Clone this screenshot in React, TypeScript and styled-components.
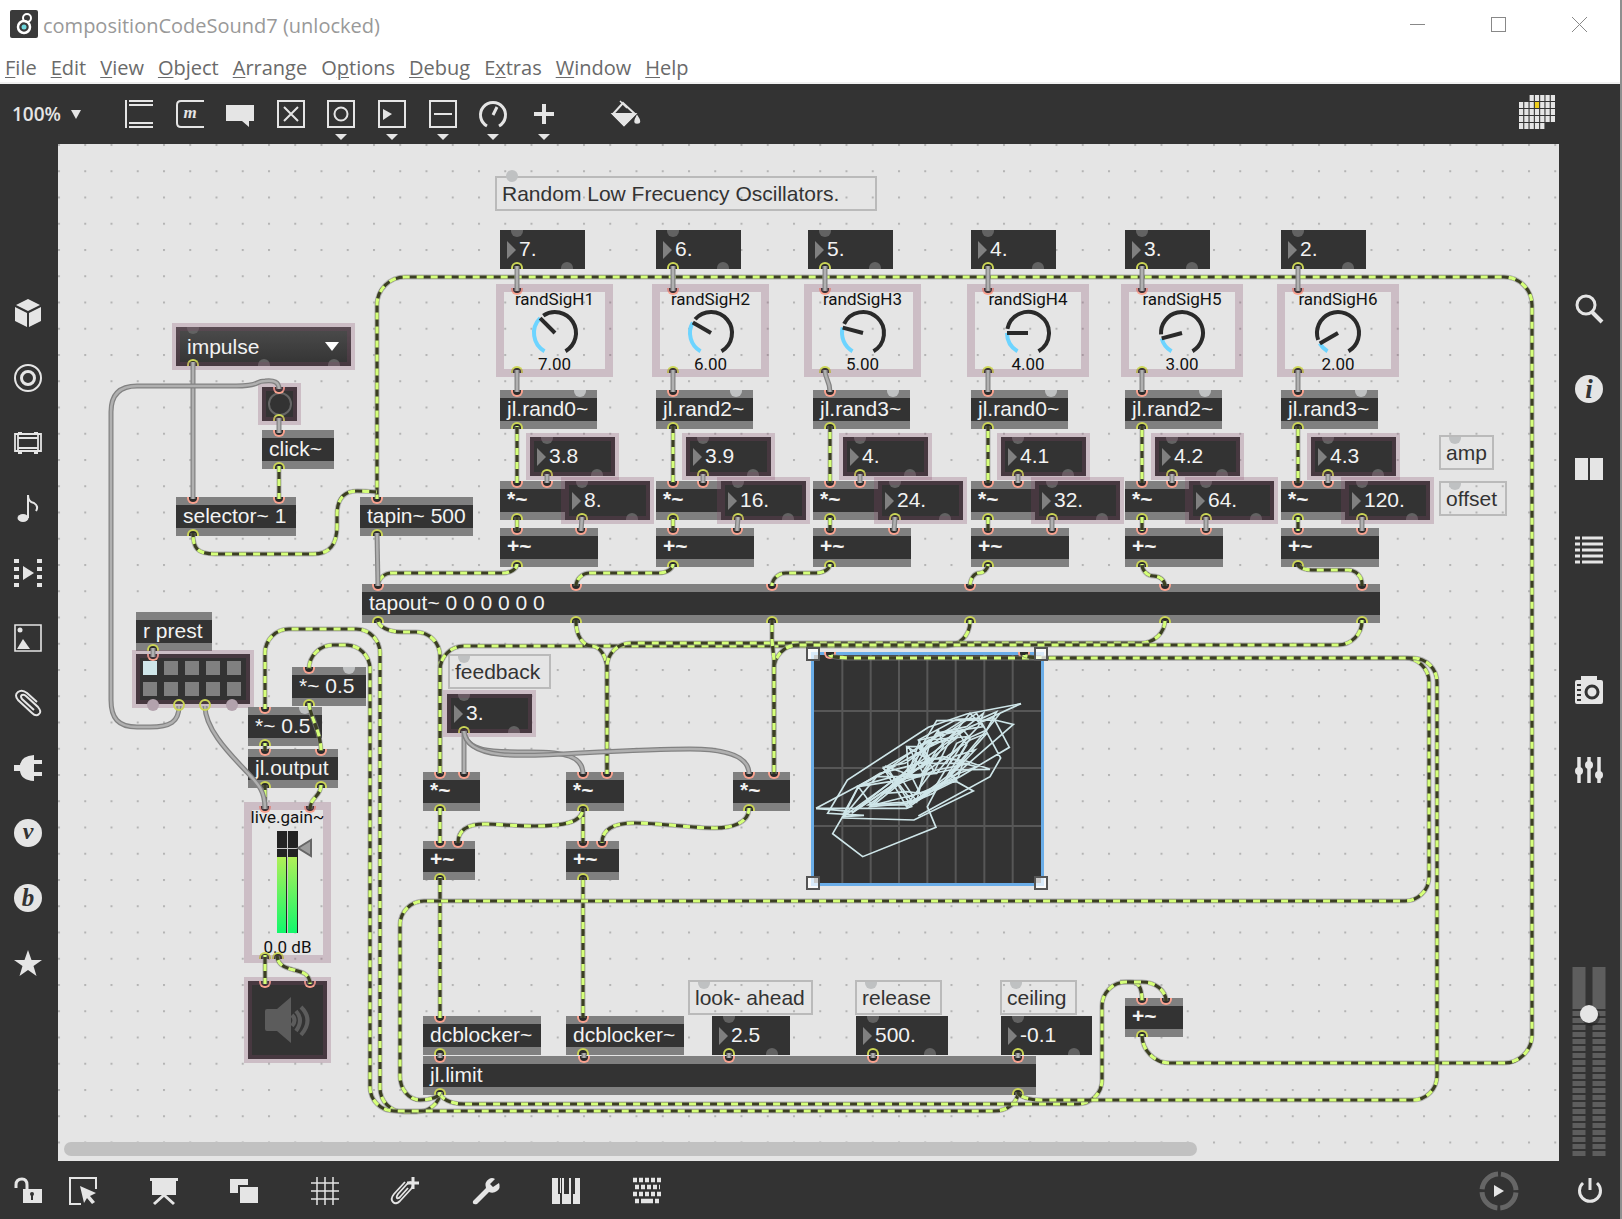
import React from "react";
import styled, { createGlobalStyle, css } from "styled-components";

const colors = {
  chrome: "#333333",
  canvas: "#e5e5e5",
  ink: "#e5e5e5",
  bar: "#808080",
  inlet: "#f9a28f",
  outlet: "#ccd656",
  lime: "#d5ff7a",
};

/* Patcher coordinates are window coordinates; the canvas begins here. */
const ORIGIN_X = 58;
const ORIGIN_Y = 144;

const GlobalStyle = createGlobalStyle`
  * { box-sizing: border-box; }
  body { margin: 0; background: #fff; }
  button, input, select { font: inherit; color: inherit; }
  button { border: 0; padding: 0; background: none; cursor: pointer; }
`;

/* ---------- window frame ---------- */

const Window = styled.div`
  display: flex;
  flex-direction: column;
  min-height: 100vh;
  overflow: hidden;
  border-right: 2px solid #8f8f8f;
  font-family: "Liberation Sans", Arial, sans-serif;
  background: ${colors.chrome};
`;

const TitleBar = styled.header`
  display: flex;
  align-items: center;
  height: 48px;
  padding-left: 10px;
  gap: 5px;
  background: #fff;
  color: #999;
  font: 20px/28px "Open Sans", "Noto Sans", sans-serif;
`;

const Title = styled.h1`
  flex: 1;
  margin: 0;
  font: inherit;
  padding-top: 4px;
`;

const WindowButton = styled.button`
  display: grid;
  place-items: center;
  width: 76px;
  height: 48px;
`;

const WindowButtons = styled.div`
  display: flex;
  gap: 5px;
  padding-right: 3px;
`;

const MenuBar = styled.nav`
  display: flex;
  align-items: center;
  gap: 14px;
  height: 36px;
  padding: 6px 5px 0;
  border-bottom: 2px solid #f0f0f0;
  background: #fff;
  color: #6a6a6a;
  font: 20px/28px "Open Sans", "Noto Sans", sans-serif;
`;

const Mnemonic = styled.span`
  text-decoration: underline;
  text-decoration-thickness: 1px;
  text-underline-offset: 2px;
`;

const Toolbar = styled.div`
  display: flex;
  align-items: center;
  height: 60px;
  padding: 0 65px 0 12px;
  color: ${colors.ink};
`;

const ZoomBox = styled.label`
  display: flex;
  align-items: center;
  gap: 5px;
  width: 102px;
  font: 600 19px/28px "Open Sans", "Noto Sans", sans-serif;

  select {
    appearance: none;
    width: 54px;
    padding: 0;
    border: 0;
    background: none;
    color: inherit;
  }
`;

const ToolGroup = styled.div`
  display: grid;
  grid-template-columns: repeat(9, 1fr);
  width: 455px;
`;

const ToolButton = styled.button`
  display: grid;
  place-items: center;
  min-width: 50px;
  height: 60px;
  color: ${colors.ink};
`;

const FillGroup = styled.div`
  flex: 1;
  padding-left: 31px;
`;

const Body = styled.div`
  display: grid;
  grid-template-columns: 58px minmax(0, 1fr) 61px;
  flex: 1;
`;

const LeftRail = styled.aside`
  display: flex;
  flex-direction: column;
  align-items: center;
  padding: 136px 3px 0 0;
  color: ${colors.ink};
`;

const RightRail = styled(LeftRail)`
  padding: 125px 1px 5px 0;
`;

const RailButton = styled.button<{ $h?: number; $gap?: number }>`
  display: grid;
  place-items: center;
  width: 40px;
  height: ${(p) => p.$h ?? 65}px;
  margin-top: ${(p) => p.$gap ?? 0}px;
  flex: none;
`;

const VolumeSlider = styled.label`
  display: grid;
  place-items: center;
  margin-top: auto;
  width: 34px;
  height: 190px;

  > * { grid-area: 1 / 1; }
`;

const HiddenRange = styled.input`
  width: 100%;
  height: 100%;
  margin: 0;
  opacity: 0;
`;

const BottomBar = styled.footer`
  display: flex;
  align-items: center;
  height: 58px;
  padding-top: 2px;
  color: ${colors.ink};
`;

const BottomButton = styled.button<{ $w: number }>`
  display: grid;
  place-items: center;
  width: ${(p) => p.$w}px;
  height: 56px;
`;

const TransportGroup = styled.div`
  display: flex;
  gap: 30px;
  margin-left: auto;
`;

/* ---------- patcher canvas ---------- */

const Canvas = styled.main`
  position: relative;
  min-height: 1017px;
  overflow: hidden;
  background: ${colors.canvas};
`;

const Layer = styled.svg`
  position: absolute;
  top: 0;
  left: 0;
  pointer-events: none;
`;

const ScrollThumb = styled.div`
  position: absolute;
  left: 6px;
  bottom: 5px;
  width: 75.5%;
  height: 14px;
  border-radius: 7px;
  background: #c1c1c1;
`;

type Place = { $x: number; $y: number; $w: number; $h?: number; $halo?: boolean };

const halo = css`
  &::after {
    content: "";
    position: absolute;
    inset: -4px;
    border: 8px solid rgba(130, 71, 102, 0.25);
    pointer-events: none;
  }
`;

const Box = styled.div<Place>`
  position: absolute;
  left: ${(p) => p.$x - ORIGIN_X}px;
  top: ${(p) => p.$y - ORIGIN_Y}px;
  width: ${(p) => p.$w}px;
  height: ${(p) => p.$h ?? 39}px;
  color: #f2f2f2;
  font-size: 21px;
  line-height: 23px;
  white-space: nowrap;
  ${(p) => p.$halo && halo}
`;

const ObjectBox = styled(Box)<{ $operator: boolean }>`
  background: ${colors.chrome};
  box-shadow: inset 0 8px ${colors.bar}, inset 0 -8px ${colors.bar};
  padding: ${(p) => (p.$operator ? 6 : 7)}px 7px;
  font-weight: ${(p) => (p.$operator ? 700 : 400)};
`;

const NumberFrame = styled(Box)`
  display: flex;
  align-items: center;
  background: ${colors.chrome};
  padding-left: 7px;
  gap: 3px;

  input {
    width: 60px;
    min-width: 0;
    height: 24px;
    margin-bottom: 2px;
    padding: 0;
    border: 0;
    background: none;
    outline: none;
  }
`;

const Triangle = styled.span`
  flex: none;
  border-left: 9px solid ${colors.bar};
  border-top: 9px solid transparent;
  border-bottom: 9px solid transparent;
`;

const CommentBox = styled(Box)`
  border: 2px solid #bababa;
  color: #333;
  padding: 4px 5px;
`;

type PortKind = "on" | "off" | "light";

const Port = styled.i<{ $side: "in" | "out"; $at: number; $kind: PortKind }>`
  position: absolute;
  left: ${(p) => p.$at - 6}px;
  width: 12px;
  height: 7px;
  ${(p) =>
    p.$side === "in"
      ? css`top: 0; border-radius: 0 0 7px 7px;`
      : css`bottom: 0; border-radius: 7px 7px 0 0;`}
  ${(p) =>
    p.$kind === "on"
      ? css`
          background: #2b2b2b;
          border: 2px solid ${p.$side === "in" ? colors.inlet : colors.outlet};
          border-${p.$side === "in" ? "top" : "bottom"}: 0;
        `
      : css`
          background: ${p.$kind === "light" ? "#bfc1c2" : "#626262"};
        `}
`;

type Ports = [number, PortKind?][];

function PortSet({ ins = [], outs = [] }: { ins?: Ports; outs?: Ports }) {
  return (
    <>
      {ins.map(([at, kind]) => (
        <Port key={"i" + at} $side="in" $at={at} $kind={kind ?? "on"} />
      ))}
      {outs.map(([at, kind]) => (
        <Port key={"o" + at} $side="out" $at={at} $kind={kind ?? "on"} />
      ))}
    </>
  );
}

type ObjProps = { x: number; y: number; w: number; text: string; ins?: Ports; outs?: Ports };

function Obj({ x, y, w, text, ins, outs = [[17]] }: ObjProps) {
  return (
    <ObjectBox $x={x} $y={y} $w={w} $operator={text.length === 2}>
      {text}
      <PortSet ins={ins} outs={outs} />
    </ObjectBox>
  );
}

type NumProps = { x: number; y: number; w?: number; value: string; name: string; lit?: boolean };

function NumberBox({ x, y, w = 85, value, name, lit }: NumProps) {
  return (
    <NumberFrame $x={x} $y={y} $w={w} $halo={lit}>
      <Triangle />
      <input aria-label={name} defaultValue={value} />
      <PortSet ins={[[17, "off"]]} outs={[[17], [w - 18, "off"]]} />
    </NumberFrame>
  );
}

function Comment({ x, y, w, text }: { x: number; y: number; w: number; text: string }) {
  return (
    <CommentBox $x={x} $y={y} $w={w} $h={35}>
      {text}
      <Port $side="in" $at={14} $kind="light" />
    </CommentBox>
  );
}

/* ---------- dials ---------- */

const DialFrame = styled(Box)`
  display: flex;
  flex-direction: column;
  justify-content: space-between;
  align-items: center;
  color: #111;
  font: 17px/18px Roboto, "Open Sans", sans-serif;
  padding-top: 2px;

  > svg { position: absolute; left: calc(50% - 55px); top: 0; }
  > input { position: absolute; left: 30px; top: 22px; width: 50px; height: 46px; }
`;

const polar = (deg: number, r: number) => {
  const a = (deg * Math.PI) / 180;
  return [55 - Math.sin(a) * r, 45 + Math.cos(a) * r] as const;
};

const arc = (from: number, to: number) => {
  const [x1, y1] = polar(from, 21);
  const [x2, y2] = polar(to, 21);
  return `M${x1} ${y1}A21 21 0 ${to - from > 180 ? 1 : 0} 1 ${x2} ${y2}`;
};

function Dial({ x, w, name, value }: { x: number; w: number; name: string; value: number }) {
  const angle = 30 + value * 15;
  const [nx, ny] = polar(angle, 21);
  return (
    <DialFrame $x={x} $y={288} $w={w} $h={85} $halo>
      <label htmlFor={name}>{name}</label>
      <output htmlFor={name}>{value.toFixed(2)}</output>
      <svg width="110" height="85" fill="none" strokeWidth="4">
        <path d={arc(30, angle)} stroke="#6dd4ff" />
        <path d={arc(angle + 11, 330)} stroke="#2a2a2a" />
        <path d={`M55 45L${nx} ${ny}`} stroke="#2a2a2a" />
      </svg>
      <HiddenRange id={name} type="range" min={0} max={20} defaultValue={value} />
      <PortSet ins={[[17]]} outs={[[17]]} />
    </DialFrame>
  );
}

/* ---------- single widgets ---------- */

const MenuFrame = styled(Box)`
  background: linear-gradient(#4c4c4c, #333);

  select {
    appearance: none;
    width: 100%;
    height: 100%;
    padding: 0 11px;
    border: 0;
    background: none;
    outline: none;
  }

  > svg { position: absolute; right: 12px; top: 15px; pointer-events: none; }
`;

const DarkBox = styled(Box)`
  background: ${colors.chrome};

  > button { display: grid; place-items: center; width: 100%; height: 100%; }
`;

const PresetFrame = styled(Box)`
  display: grid;
  grid-template-columns: repeat(5, 14px);
  grid-auto-rows: 14px;
  gap: 7px;
  padding: 7px;
  background: ${colors.chrome};
`;

const Slot = styled.button<{ $active: boolean }>`
  background: ${(p) => (p.$active ? "#cfe6e9" : colors.bar)};
`;

const GainFrame = styled(Box)`
  display: flex;
  flex-direction: column;
  justify-content: space-between;
  align-items: center;
  color: #111;
  font: 17px/20px Roboto, "Open Sans", sans-serif;
  padding: 1px 0 2px;

  > svg { position: absolute; left: 0; top: 0; }
  > input { position: absolute; left: 20px; top: 24px; width: 46px; height: 104px; }
`;

const ScopeFrame = styled(Box)`
  background: ${colors.chrome};
`;

/* ---------- data ---------- */

const columns = [
  { top: 500, obj: 500, offset: 565, dial: 109, value: 7, amp: "3.8", off: "8.", rand: "jl.rand0~" },
  { top: 656, obj: 656, offset: 721, dial: 109, value: 6, amp: "3.9", off: "16.", rand: "jl.rand2~" },
  { top: 808, obj: 813, offset: 878, dial: 109, value: 5, amp: "4.", off: "24.", rand: "jl.rand3~" },
  { top: 971, obj: 971, offset: 1035, dial: 114, value: 4, amp: "4.1", off: "32.", rand: "jl.rand0~" },
  { top: 1125, obj: 1125, offset: 1189, dial: 114, value: 3, amp: "4.2", off: "64.", rand: "jl.rand2~" },
  { top: 1281, obj: 1281, offset: 1345, dial: 114, value: 2, amp: "4.3", off: "120.", rand: "jl.rand3~" },
];

const taps = [378, 576, 772, 970, 1165, 1362];

type Point = [number, number];

/* Polyline with rounded corners, as patch cords are drawn. */
function route(points: Point[], radius = 24): string {
  let d = `M${points[0][0]} ${points[0][1]}`;
  for (let i = 1; i < points.length - 1; i++) {
    const [px, py] = points[i - 1];
    const [x, y] = points[i];
    const [nx, ny] = points[i + 1];
    const before = Math.hypot(x - px, y - py);
    const after = Math.hypot(nx - x, ny - y);
    const a = Math.min(radius, i === 1 ? before : before / 2);
    const b = Math.min(radius, i === points.length - 2 ? after : after / 2);
    const sx = x + ((px - x) / before) * a;
    const sy = y + ((py - y) / before) * a;
    const ex = x + ((nx - x) / after) * b;
    const ey = y + ((ny - y) / after) * b;
    const k = 0.45;
    d += `L${sx} ${sy}C${x + (sx - x) * k} ${y + (sy - y) * k} ${x + (ex - x) * k} ${y + (ey - y) * k} ${ex} ${ey}`;
  }
  const last = points[points.length - 1];
  return d + `L${last[0]} ${last[1]}`;
}

const tapRows = [573, 573, 573, 573, 576, 570];

const signalCords: string[] = [
  route([[1142, 1034], [1142, 1063], [1532, 1063], [1532, 277], [377, 277], [377, 499]], 28),
  "M193 533C193 548 197 554 215 554L313 554C331 554 337 543 337 526L337 515C337 498 345 491 357 491C366 491 377 492 377 492",
  "M279 466V499",
  ...columns.flatMap((c, i) => [
    `M${c.obj + 17} 426V483`,
    `M${c.obj + 17} 517V531`,
    route([[c.obj + 17, 564], [c.obj + 17, tapRows[i]], [taps[i], tapRows[i]], [taps[i], 586]], 14),
  ]),
  route([[378, 620], [378, 632], [440, 632], [440, 774]]),
  route([[970, 620], [970, 646], [440, 646], [440, 774]]),
  route([[576, 620], [576, 646], [607, 646], [607, 774]]),
  route([[1165, 620], [1165, 643], [607, 643], [607, 774]]),
  route([[1362, 620], [1362, 645], [774, 645], [774, 774]]),
  "M772 620V640L774 660V774",
  "M440 808V843",
  "M583 808V843",
  "M583 808C583 823 562 826 535 826C510 826 500 824 485 824C468 824 458 830 458 843",
  "M749 808C749 824 730 828 715 828C690 828 660 823 635 823C615 823 602 828 602 843",
  "M440 877V1018",
  "M583 877V1018",
  route([[440, 1092], [440, 1112], [380, 1112], [380, 629], [265, 629], [265, 709]]),
  route([[1018, 1092], [1018, 1111], [370, 1111], [370, 645], [309, 645], [309, 669]]),
  "M1102 982L1130 982C1138 982 1142 986 1142 1001",
  route([[440, 1092], [440, 1104], [1102, 1104], [1102, 982], [1166, 982], [1166, 1001]]),
  route([[440, 1092], [440, 1100], [400, 1100], [400, 901], [1429, 901], [1429, 658], [830, 658], [830, 655]]),
  route([[1018, 1092], [1018, 1100], [1437, 1100], [1437, 658], [1024, 658], [1024, 655]]),
  "M309 702C309 716 321 730 321 751",
  "M265 743V751",
  "M265 785V809",
  "M321 785C321 797 310 797 310 809",
  "M265 955V984",
  "M277 956C279 976 310 964 310 984",
].filter((d) => !d.startsWith("M1102 982L"));

const lowerBranch = "M1120 982L1130 982C1138 982 1142 986 1142 1001";

const controlCords: string[] = [
  ...columns.flatMap((c) => [
    `M${c.top + 17} 266V291`,
    `M${c.top + 17} 370C${c.top + 17} 380 ${c.obj + 17} 380 ${c.obj + 17} 392`,
    `M${c.obj + 47} 474V483`,
    `M${c.offset + 17} 517L${c.obj + 81} 531`,
  ]),
  "M193 362V499",
  "M279 418V433",
  "M377 533L378 586",
  "M464 731V774",
  "M464 731C466 752 490 752 530 752C565 752 583 756 583 774",
  "M464 731C466 760 520 757 580 753C620 751 660 749 690 749C730 749 749 758 749 774",
  "M179 706C179 722 170 727 150 727L137 727C118 727 111 718 111 700L111 412C111 394 120 386 137 386L236 386C262 386 254 381 265 381C274 380 279 382 279 389",
  "M205 706C205 730 232 756 245 770C258 784 265 790 265 809",
  "M153 648V657",
  "M440 1053V1058",
  "M584 1053V1058",
  "M729 1053V1058",
  "M873 1053V1058",
  "M1018 1053V1058",
];

/* Oscilloscope trace, in thirds of a pixel. */
const trace = [
  "693,221 530,252 415,292 172,450 113,550 222,556 158,560 128,611 218,680 438,592 412,530 448,462 500,455 550,483 372,570 158,564",
  "78,535 276,430 400,340 440,272 615,270 670,283 490,440 350,535 200,535 78,535",
  "693,221 585,270 400,360 205,470 160,560 340,430 540,290 610,262 658,352 510,440 360,515 245,524 205,470 300,455 480,420 600,418 520,390 410,385 350,350 355,430 390,330 520,300 540,325 470,440 350,530 280,412 345,400 500,290 560,250 632,384 600,440 385,558",
  "160,560 260,440 390,440 440,360 500,300 470,350 430,430 330,440 380,515 400,430 540,330 590,310 430,490 360,520 450,470 555,360 490,380 430,480 250,525 300,485 420,385 390,350 450,310 580,290 540,250 500,300 530,345 500,395 560,410 480,440 370,520 310,440 200,470",
  "185,550 420,390 385,330 500,268 575,265 620,245 590,300 500,340 470,400 380,400 330,460 280,415 390,350 430,420 350,525 235,525 360,435 445,300 460,350 400,430 355,350 395,350",
  "158,556 205,470 270,430 350,410 460,380 520,395 505,440 390,490 350,485 290,490 350,420 440,310 530,290 580,250 565,290 480,380 440,430 360,435 290,410 365,530 350,535",
  "205,535 300,470 440,420 540,400 480,400 530,320 415,330 385,350 415,400 330,440 240,530 350,520 395,500 360,430 400,345 520,270 570,265",
  "78,535 190,545 310,450 400,410 420,340 480,330 505,320 430,380 380,490 440,480 500,450 480,430 590,300 630,250",
];

const menus: [string, number][] = [
  ["File", 0], ["Edit", 0], ["View", 0], ["Object", 0], ["Arrange", 0],
  ["Options", 1], ["Debug", 0], ["Extras", 1], ["Window", 0], ["Help", 0],
];

/* ---------- icons ---------- */

type Glyph = { label: string; art: React.ReactNode };

const Drawing = styled.svg`
  overflow: visible;
`;

function Icon({ children }: { children: React.ReactNode }) {
  return (
    <Drawing width="28" height="28" viewBox="0 0 28 28" fill="none" stroke="currentColor" strokeWidth="2">
      {children}
    </Drawing>
  );
}

function ToolIcon({ art, more }: { art: React.ReactNode; more?: boolean }) {
  return (
    <Drawing width="28" height="56" viewBox="0 -14 28 56" fill="none" stroke="currentColor" strokeWidth="2">
      {art}
      {more && <path d="M8 34H20L14 40Z" fill="currentColor" stroke="none" />}
    </Drawing>
  );
}

const glyphText = (char: string, size: number, y: number, fill = "currentColor") => (
  <text x="14" y={y} textAnchor="middle" fill={fill} stroke="none" fontSize={size}
    fontFamily="Liberation Serif, serif" fontStyle="italic" fontWeight="bold">{char}</text>
);

const tools: (Glyph & { more?: boolean })[] = [
  { label: "Object", art: <path d="M1 0V28M4 1H28M4 5H28M4 23H28M4 27H28" /> },
  { label: "Message", art: <><path d="M28 1H5Q1 1 1 5V23Q1 27 5 27H28" />{glyphText("m", 17, 18)}</> },
  { label: "Comment", art: <path d="M0 5H28V21H23V27L16 21H0Z" fill="currentColor" stroke="none" /> },
  { label: "Toggle", art: <><path d="M1 1H27V27H1Z" /><path d="M7 7L21 21M21 7L7 21" /></> },
  { label: "Button", more: true, art: <><path d="M1 1H27V27H1Z" /><circle cx="14" cy="14" r="6.500" /></> },
  { label: "Playback", more: true, art: <><path d="M1 1H27V27H1Z" /><path d="M5 9V20L14 14Z" fill="currentColor" stroke="none" /></> },
  { label: "Slider", more: true, art: <path d="M1 1H27V27H1ZM5 14H23" /> },
  { label: "Dial", more: true, art: <path d="M8 26A12.500 12.500 0 1 1 20 26M14 15L18 7" strokeWidth="3" /> },
  { label: "Add", more: true, art: <path d="M14 4V24M4 14H24" strokeWidth="4" /> },
];

const bucketArt = (
  <>
    <path d="M12 3L24 14L13 25L2 14Z" />
    <path d="M2 14H24L13 25Z" fill="currentColor" />
    <path d="M9 1L16 8M26 16Q31 23 26 23Q22 23 26 16Z" fill="currentColor" strokeWidth="1.500" />
  </>
);

const leftGlyphs: Glyph[] = [
  { label: "Packages", art: <g fill="currentColor" stroke="none"><path d="M14 0L26 6L14 12L2 6Z" /><path d="M1 8L13 14V28L1 22Z" /><path d="M27 8L15 14V28L27 22Z" /></g> },
  { label: "Targets", art: <><circle cx="14" cy="14" r="13" /><circle cx="14" cy="14" r="6.500" strokeWidth="3" /></> },
  { label: "Amps", art: <path d="M1 5H27V22H1ZM4 5V22M24 5V22M4 9H24M4 19H24M4 4H8M20 4H24M4 24H8M20 24H24" strokeWidth="1.800" /> },
  { label: "Audio", art: <><ellipse cx="9" cy="24" rx="5.500" ry="4" fill="currentColor" stroke="none" /><path d="M14 24V1Q14 8 20 9Q25 12 22 17" /></> },
  { label: "Video", art: <g fill="currentColor" stroke="none"><path d="M9 7V21L20 14Z" /><path d="M0 0H5V4H0ZM0 8H5V12H0ZM0 16H5V20H0ZM0 24H5V28H0ZM23 0H28V4H23ZM23 8H28V12H23ZM23 16H28V20H23ZM23 24H28V28H23Z" /></g> },
  { label: "Images", art: <><path d="M1 1H27V27H1Z" strokeWidth="1.600" /><circle cx="6" cy="6" r="2.500" fill="currentColor" stroke="none" /><path d="M3 25L9 15L16 25Z" fill="currentColor" stroke="none" /></> },
  { label: "Snippets", art: <path d="M20 21L8 10Q6 7 8 6Q10 5 12 7L24 18Q28 23 25 25Q22 28 18 24L4 11Q0 6 4 3Q8 0 13 4L23 13" /> },
  { label: "Plug-ins", art: <path d="M20 1V27Q7 26 6 17H0V11H6Q7 2 20 1ZM20 6H28V10H20ZM20 18H28V22H20Z" fill="currentColor" stroke="none" /> },
  { label: "Vizzie", art: <><circle cx="14" cy="14" r="14" fill="currentColor" stroke="none" />{glyphText("v", 24, 20, colors.chrome)}</> },
  { label: "Beap", art: <><circle cx="14" cy="14" r="14" fill="currentColor" stroke="none" />{glyphText("b", 25, 22, colors.chrome)}</> },
  { label: "Favourites", art: <path d="M14 1L17.500 11H28L19.500 17L22.500 27L14 21L5.500 27L8.500 17L0 11H10.500Z" fill="currentColor" stroke="none" /> },
];

const rightGlyphs: (Glyph & { h: number; gap?: number })[] = [
  { label: "Search", h: 80, art: <><circle cx="11" cy="10" r="9" strokeWidth="3" /><path d="M17 17L27 27" strokeWidth="4" /></> },
  { label: "Inspector", h: 80, art: <><circle cx="14" cy="14" r="14" fill="currentColor" stroke="none" />{glyphText("i", 27, 23, colors.chrome)}</> },
  { label: "Reference", h: 80, art: <path d="M0 3H13V25H0ZM15 3H28V25H15Z" fill="currentColor" stroke="none" /> },
  { label: "Console", h: 80, art: <path d="M0 3H5M7 3H28M0 9H5M7 9H28M0 15H5M7 15H28M0 21H5M7 21H28M0 27H5M7 27H28" strokeWidth="3" /> },
  { label: "Snapshots", h: 80, gap: 61, art: <><path d="M6 0H22V4H26Q28 4 28 6V26Q28 28 26 28H2Q0 28 0 26V6Q0 4 2 4H6Z" fill="currentColor" stroke="none" /><circle cx="17" cy="16" r="6" stroke={colors.chrome} strokeWidth="3" /><path d="M2 9H6M2 14H6M2 19H6M2 24H6" stroke={colors.chrome} /></> },
  { label: "Mixer", h: 80, art: <><path d="M4 1V27M14 1V27M24 1V27" strokeWidth="3.500" /><g fill="currentColor" stroke="none"><circle cx="4" cy="15" r="4" /><circle cx="14" cy="9" r="4" /><circle cx="24" cy="19" r="4" /></g></> },
];

const bottomGlyphs: (Glyph & { w: number })[] = [
  { label: "Unlock", w: 56, art: <><path d="M2 11V8Q2 2 8 2Q13 2 13 8V12" strokeWidth="3" /><path d="M9 12H28V26H9Z" fill="currentColor" stroke="none" /><circle cx="18" cy="17" r="2" fill={colors.chrome} stroke="none" /><path d="M18 17V23" stroke={colors.chrome} /></> },
  { label: "Select", w: 54, art: <><path d="M12 27H1V1H27V12" /><path d="M11 9L27 16L21 19L26 25L23 27L18 21L15 26Z" fill="currentColor" stroke="none" /></> },
  { label: "Presentation", w: 107, art: <><path d="M0 1H28V4H26V18H2V4H0Z" fill="currentColor" stroke="none" /><path d="M14 18L4 27M14 18L24 27" strokeWidth="3" /></> },
  { label: "New view", w: 54, art: <><path d="M0 2H18V8H8V16H0Z" fill="currentColor" stroke="none" /><path d="M10 10H28V26H10Z" fill="currentColor" stroke="none" /></> },
  { label: "Grid", w: 107, art: <path d="M6 0V28M14 0V28M22 0V28M0 6H28M0 14H28M0 22H28" strokeWidth="1.500" /> },
  { label: "Add snippet", w: 54, art: <><path d="M17 11L9 20Q7 22 6 21Q5 20 7 17L16 7Q19 4 21 6Q23 8 20 12L9 24Q5 28 2 25Q-1 22 3 17L14 5" strokeWidth="1.800" /><path d="M22 0V12M16 6H28" strokeWidth="3" /></> },
  { label: "Tools", w: 107, art: <path d="M1 24L14 11Q12 5 17 2Q20 0 23 2L18 7L21 10L27 6Q29 11 25 14Q21 17 17 15L5 27Q0 28 1 24Z" fill="currentColor" stroke="none" /> },
  { label: "Keyboard", w: 54, art: <path d="M0 1H6V17H8V27H0ZM10 1H12V17H17V1H19V27H10ZM22 17H23V1H28V27H21V17ZM8 1H9V16H8Z" fill="currentColor" stroke="none" /> },
  { label: "Key mapping", w: 107, art: <g strokeWidth="4.500"><path d="M0 3H28" strokeDasharray="4 2" /><path d="M2 10H27" strokeDasharray="4 2" /><path d="M0 17H28" strokeDasharray="4 2" /><path d="M2 24H6M8 24H20M22 24H26" /></g> },
];

const powerArt = <path d="M14 1V13M7 6A10.500 10.500 0 1 0 21 6" strokeWidth="3" />;

const calendarCells: Point[] = [];
for (let row = 0; row < 5; row++) {
  for (let col = 0; col < 7; col++) {
    if ((row === 0 && col < 2) || (row === 4 && col > 4)) continue;
    calendarCells.push([col, row]);
  }
}

/* ---------- parts ---------- */

function Scope() {
  return (
    <ScopeFrame $x={811} $y={652} $w={233} $h={234}>
      <svg width="233" height="234" viewBox="63 66 699 702" fill="none">
        {[157, 242, 327, 412, 497, 583, 668].map((x) => (
          <path key={x} d={`M${x} 69V765`} stroke="#575757" strokeWidth="6" />
        ))}
        {[243, 414, 588].map((y) => (
          <path key={y} d={`M66 ${y}H759`} stroke="#575757" strokeWidth="6" />
        ))}
        {trace.map((points) => (
          <polyline key={points} points={points} stroke="#cfe6e9" strokeWidth="5" />
        ))}
        <rect x="67.500" y="70.500" width="690" height="693" stroke="#6aade8" strokeWidth="9" />
      </svg>
      <PortSet ins={[[19], [213]]} />
    </ScopeFrame>
  );
}

function Gain() {
  return (
    <GainFrame $x={248} $y={806} $w={79} $h={153} $halo>
      <label htmlFor="gain">live.gain~</label>
      <output htmlFor="gain">0.0 dB</output>
      <svg width="79" height="153">
        <defs>
          <linearGradient id="meter" x1="0" y1="0" x2="0" y2="1">
            <stop offset="0" stopColor="#b0ef58" />
            <stop offset="1" stopColor="#12f76c" />
          </linearGradient>
        </defs>
        <path d="M29 25H50V127H29Z" fill="#222" />
        <path d="M29 51H38V127H29ZM40 51H49V127H40Z" fill="url(#meter)" />
        <path d="M39.500 25V127M29 42.500H50" stroke="#c8c8c8" />
        <path d="M50 42L63 34V50Z" fill="#9c9c9c" stroke="#666" strokeWidth="2" />
      </svg>
      <HiddenRange id="gain" type="range" min={-70} max={6} defaultValue={0} />
      <PortSet ins={[[17], [62]]} outs={[[17], [30]]} />
    </GainFrame>
  );
}

function Cords() {
  return (
    <Layer width="1564" height="1017" viewBox={`${ORIGIN_X} ${ORIGIN_Y} 1564 1017`} fill="none">
      {[lowerBranch, ...signalCords].map((d, i) => (
        <g key={i}>
          <path d={d} stroke="#8c8c8c" strokeOpacity="0.6" strokeWidth="5" />
          <path d={d} stroke="#3b3f22" strokeWidth="3.200" />
          <path d={d} stroke={colors.lime} strokeWidth="3.200" strokeDasharray="7 7" strokeDashoffset={(i * 5) % 14} />
        </g>
      ))}
      {controlCords.map((d, i) => (
        <g key={i}>
          <path d={d} stroke="#828282" strokeWidth="5" />
          <path d={d} stroke="#b0b0b0" strokeWidth="2.500" />
        </g>
      ))}
      {([[813, 654], [1041, 654], [813, 883], [1041, 883]] as Point[]).map(([x, y]) => (
        <rect key={`${x}-${y}`} x={x - 6} y={y - 6} width="12" height="12" fill="#fff" fillOpacity="0.75" stroke="#555" strokeWidth="2" />
      ))}
      {([[153, colors.bar], [179, colors.outlet], [205, colors.outlet], [232, colors.bar]] as [number, string][]).map(([x, c]) => (
        <circle key={x} cx={x} cy="705" r={c === colors.bar ? 6 : 5} fill={c === colors.bar ? "#b3a2ad" : "none"}
          stroke={c === colors.bar ? "none" : c} strokeWidth="2" />
      ))}
      <circle cx="512" cy="176" r="6" fill="#bfc1c2" />
    </Layer>
  );
}

function Patch() {
  return (
    <Canvas>
      <Layer width="100%" height="100%">
        <defs>
          <pattern id="grid" width="26.250" height="26.250" patternUnits="userSpaceOnUse">
            <rect width="2" height="2" fill="#b4b4b4" />
          </pattern>
        </defs>
        <rect width="100%" height="100%" fill="url(#grid)" />
      </Layer>

      <CommentBox $x={495} $y={176} $w={382} $h={35}>Random Low Frecuency Oscillators.</CommentBox>

      {columns.map((c, i) => (
        <React.Fragment key={c.top}>
          <NumberBox x={c.top} y={230} value={`${c.value}.`} name={`Rate ${i + 1}`} />
          <Dial x={c.top} w={c.dial} name={`randSigH${i + 1}`} value={c.value} />
          <Obj x={c.obj} y={390} w={97} text={c.rand} ins={[[17], [80, "light"]]} />
          <Obj x={c.obj} y={481} w={85} text="*~" ins={[[17], [47]]} />
          <Obj x={c.obj} y={528} w={98} text="+~" ins={[[17], [81]]} />
          <NumberBox x={c.obj + 30} y={437} value={c.amp} name={`Amp ${i + 1}`} lit />
          <NumberBox x={c.offset} y={481} value={c.off} name={`Offset ${i + 1}`} lit />
        </React.Fragment>
      ))}

      <Comment x={1439} y={435} w={55} text="amp" />
      <Comment x={1439} y={481} w={68} text="offset" />

      <MenuFrame $x={176} $y={327} $w={175} $halo>
        <select aria-label="Source" defaultValue="impulse"><option>impulse</option></select>
        <svg width="14" height="9"><path d="M0 0H14L7 9Z" fill="#fff" /></svg>
        <PortSet ins={[[17, "off"]]} outs={[[17], [88, "off"], [158, "off"]]} />
      </MenuFrame>
      <DarkBox $x={262} $y={387} $w={35} $h={34} $halo>
        <button aria-label="Bang">
          <svg width="26" height="26" fill="none"><circle cx="13" cy="13" r="11" stroke="#666" strokeWidth="2" /></svg>
        </button>
        <PortSet ins={[[17]]} outs={[[17]]} />
      </DarkBox>
      <Obj x={262} y={430} w={72} text="click~" ins={[[17]]} />
      <Obj x={176} y={497} w={120} text="selector~ 1" ins={[[17], [103]]} />
      <Obj x={360} y={497} w={113} text="tapin~ 500" ins={[[17]]} />
      <Obj x={362} y={584} w={1018} text="tapout~ 0 0 0 0 0 0"
        ins={taps.map((t) => [t - 362])} outs={taps.map((t) => [t - 362])} />

      <Obj x={136} y={612} w={76} text="r prest" />
      <PresetFrame $x={136} $y={654} $w={114} $h={50} $halo>
        {Array.from({ length: 10 }, (_, i) => (
          <Slot key={i} $active={i === 0} aria-label={`Preset ${i + 1}`} />
        ))}
        <PortSet ins={[[17]]} />
      </PresetFrame>
      <Obj x={292} y={667} w={74} text="*~ 0.5" ins={[[17], [57, "light"]]} />
      <Obj x={248} y={707} w={74} text="*~ 0.5" ins={[[17], [57, "light"]]} />
      <Obj x={248} y={749} w={90} text="jl.output" ins={[[17], [73]]} outs={[[17], [73]]} />
      <Gain />
      <DarkBox $x={248} $y={981} $w={79} $h={78} $halo>
        <button aria-label="Audio on">
          <svg width="78" height="78" fill="none" stroke="#5c5c5c" strokeWidth="4">
            <path d="M16 30Q16 28 18 28H28L42 16V62L28 50H18Q16 50 16 48Z" fill="#5c5c5c" stroke="none" />
            <path d="M43 34Q48 39 43 45M47 30Q55 39 47 50M52 26Q65 39 52 54" />
          </svg>
        </button>
        <PortSet ins={[[17], [62]]} />
      </DarkBox>

      <Comment x={448} y={654} w={103} text="feedback" />
      <NumberBox x={447} y={694} value="3." name="Feedback" lit />
      <Obj x={423} y={772} w={57} text="*~" ins={[[17], [41]]} />
      <Obj x={566} y={772} w={58} text="*~" ins={[[17], [41]]} />
      <Obj x={733} y={772} w={57} text="*~" ins={[[16], [41]]} outs={[[16]]} />
      <Obj x={423} y={841} w={52} text="+~" ins={[[17], [35]]} />
      <Obj x={566} y={841} w={53} text="+~" ins={[[17], [36]]} />
      <Scope />

      <Obj x={423} y={1016} w={118} text="dcblocker~" ins={[[17]]} />
      <Obj x={566} y={1016} w={118} text="dcblocker~" ins={[[17]]} />
      <Comment x={688} y={980} w={125} text="look- ahead" />
      <Comment x={855} y={980} w={87} text="release" />
      <Comment x={1000} y={980} w={77} text="ceiling" />
      <NumberBox x={712} y={1016} w={78} value="2.5" name="Look-ahead" />
      <NumberBox x={856} y={1016} w={92} value="500." name="Release" />
      <NumberBox x={1001} y={1016} w={91} value="-0.1" name="Ceiling" />
      <Obj x={423} y={1056} w={613} text="jl.limit"
        ins={[[17], [161], [306], [450], [595]]} outs={[[17], [595]]} />
      <Obj x={1125} y={998} w={58} text="+~" ins={[[17], [41]]} />

      <Cords />
      <ScrollThumb />
    </Canvas>
  );
}

export default function App() {
  return (
    <Window>
      <GlobalStyle />
      <TitleBar>
        <svg width="28" height="28" fill="none">
          <rect width="28" height="28" rx="2" fill="#3a3a3a" />
          <circle cx="14" cy="17" r="6" stroke="#fff" strokeWidth="2.500" />
          <circle cx="17" cy="8" r="4" stroke="#fff" strokeWidth="2" />
          <circle cx="14" cy="17" r="2.500" fill="#6fd8de" />
        </svg>
        <Title>compositionCodeSound7 (unlocked)</Title>
        <WindowButtons>
          <WindowButton aria-label="Minimize"><svg width="15" height="15"><path d="M0 7.500H15" stroke="#888" /></svg></WindowButton>
          <WindowButton aria-label="Maximize"><svg width="15" height="15" fill="none"><rect x=".5" y=".5" width="14" height="14" stroke="#888" /></svg></WindowButton>
          <WindowButton aria-label="Close"><svg width="15" height="15"><path d="M0 0L15 15M15 0L0 15" stroke="#888" /></svg></WindowButton>
        </WindowButtons>
      </TitleBar>
      <MenuBar>
        {menus.map(([name, at]) => (
          <button key={name}>
            {name.slice(0, at)}<Mnemonic>{name[at]}</Mnemonic>{name.slice(at + 1)}
          </button>
        ))}
      </MenuBar>
      <Toolbar>
        <ZoomBox>
          <select aria-label="Zoom" defaultValue="100%"><option>100%</option></select>
          <svg width="10" height="9"><path d="M0 0H10L5 9Z" fill="currentColor" /></svg>
        </ZoomBox>
        <ToolGroup>
          {tools.map((t) => (
            <ToolButton key={t.label} aria-label={t.label}>
              <ToolIcon art={t.art} more={t.more} />
            </ToolButton>
          ))}
        </ToolGroup>
        <FillGroup>
          <ToolButton aria-label="Fill colour"><ToolIcon art={bucketArt} /></ToolButton>
        </FillGroup>
        <button aria-label="Calendar">
          <svg width="36" height="34">
            {calendarCells.map(([col, row]) => (
              <rect key={`${col}-${row}`} x={col * 5.3} y={row * 7} width="4.200" height="6"
                fill={col === 3 && row === 1 ? "#f0cf1c" : "#e5e5e5"} />
            ))}
          </svg>
        </button>
      </Toolbar>
      <Body>
        <LeftRail>
          {leftGlyphs.map((g) => (
            <RailButton key={g.label} aria-label={g.label}><Icon>{g.art}</Icon></RailButton>
          ))}
        </LeftRail>
        <Patch />
        <RightRail>
          {rightGlyphs.map((g) => (
            <RailButton key={g.label} aria-label={g.label} $h={g.h} $gap={g.gap}><Icon>{g.art}</Icon></RailButton>
          ))}
          <VolumeSlider>
            <svg width="34" height="190" fill="none">
              <path d="M7 1V43M27 1V43" stroke="#5e5e5e" strokeWidth="13" />
              <path d="M7 45V190M27 45V190" stroke="#5e5e5e" strokeWidth="13" strokeDasharray="5 2" />
              <circle cx="19" cy="51" r="9" fill="#222" fillOpacity="0.5" />
              <circle cx="17" cy="48" r="9" fill="#e5e5e5" />
            </svg>
            <HiddenRange type="range" aria-label="Volume" />
          </VolumeSlider>
        </RightRail>
      </Body>
      <BottomBar>
        {bottomGlyphs.map((g) => (
          <BottomButton key={g.label} aria-label={g.label} $w={g.w}><Icon>{g.art}</Icon></BottomButton>
        ))}
        <TransportGroup>
          <BottomButton aria-label="Run" $w={60}>
            <svg width="40" height="40" fill="none">
              <circle cx="20" cy="20" r="17" stroke="#666" strokeWidth="5" strokeDasharray="23.700 3" strokeDashoffset="-1.500" />
              <path d="M15 14V26L25 20Z" fill="#e5e5e5" />
            </svg>
          </BottomButton>
          <BottomButton aria-label="Power" $w={61}><Icon>{powerArt}</Icon></BottomButton>
        </TransportGroup>
      </BottomBar>
    </Window>
  );
}
